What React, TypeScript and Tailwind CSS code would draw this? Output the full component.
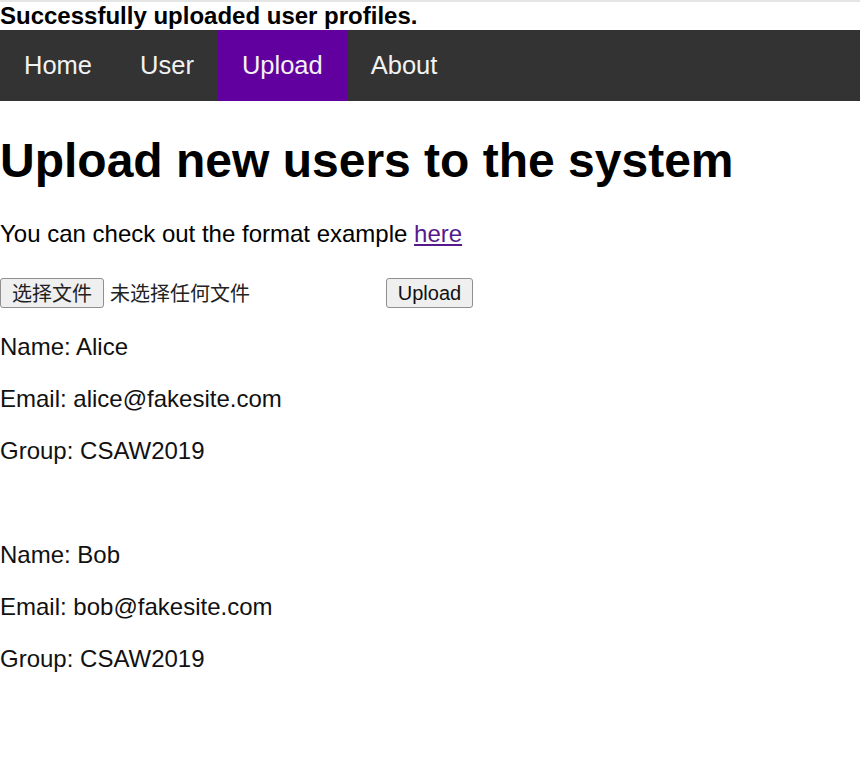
const navItems = ["Home", "User", "Upload", "About"];

const users = [
  { name: "Alice", email: "alice@fakesite.com", group: "CSAW2019" },
  { name: "Bob", email: "bob@fakesite.com", group: "CSAW2019" },
];

export default function App() {
  return (
    <div className="min-h-[758px] bg-white border-t-2 border-[#e5e5e5] text-black font-['Liberation_Sans',Arial,sans-serif]">
      <div className="text-[24px] font-bold leading-[28px]">
        Successfully uploaded user profiles.
      </div>

      {/* Top navigation */}
      <nav className="flex bg-[#333333]">
        {navItems.map((item) => (
          <a
            key={item}
            href="#"
            className={`px-[24px] py-[21px] text-[25.5px] leading-[29px] text-[#f2f2f2] ${
              item === "Upload" ? "bg-[#62009f]" : ""
            }`}
          >
            {item}
          </a>
        ))}
      </nav>

      <h1 className="mt-[32px] text-[48px] font-bold leading-[55px]">
        Upload new users to the system
      </h1>

      <p className="mt-[32px] text-[24px] leading-[28px]">
        You can check out the format example{" "}
        <a href="#" className="text-[#551a8b] underline">
          here
        </a>
      </p>

      {/* Upload form */}
      <form className="mt-[30px] flex items-center h-[30px] text-[20px]">
        <div className="flex items-center w-[386px]">
          <button
            type="button"
            className="w-[104px] h-[30px] flex items-center justify-center bg-[#efefef] border border-[#8f8f8f] rounded-[3px] text-[#222] font-['Noto_Sans_CJK_SC',sans-serif] leading-[28px]"
          >
            选择文件
          </button>
          <span className="ml-[6px] text-[#222] font-['Noto_Sans_CJK_SC',sans-serif] leading-[28px]">
            未选择任何文件
          </span>
        </div>
        <button
          type="button"
          className="w-[87px] h-[30px] flex items-center justify-center bg-[#efefef] border border-[#8f8f8f] rounded-[3px] text-[#111] leading-[24px]"
        >
          Upload
        </button>
      </form>

      <div className="mt-[25px] text-[24px] leading-[28px] text-[#111]">
        {users.map((u, i) => (
          <div key={u.name} className={i > 0 ? "mt-[76px]" : ""}>
            <p>Name: {u.name}</p>
            <p className="mt-[24px]">Email: {u.email}</p>
            <p className="mt-[24px]">Group: {u.group}</p>
          </div>
        ))}
      </div>
    </div>
  );
}
